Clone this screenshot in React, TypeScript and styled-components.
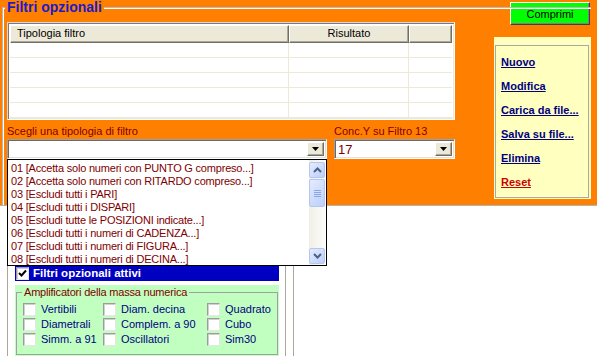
import React from "react";
import styled, { createGlobalStyle } from "styled-components";

const GlobalStyle = createGlobalStyle`
  html, body { margin: 0; padding: 0; background: #fff; }
  body { font-family: "Liberation Sans", Arial, sans-serif; font-size: 11px; }
  * { box-sizing: border-box; }
`;

const Page = styled.div`
  width: 597px;
  height: 356px;
  overflow: hidden;
  background: #fff;
`;

const OrangePanel = styled.div`
  position: relative;
  height: 206px;
  background: #ff8000;
  border-bottom: 1px solid #b4b4b4;
  padding-top: 7px;
`;

const Frame = styled.div`
  position: relative;
  margin: 0 6px 0 2px;
  height: 198px;
  border-top: 1px solid #b8b8b8;
  border-left: 1px solid #b8b8b8;
  box-shadow: inset 1px 1px 0 #fff;
  padding: 14px 0 0 4px;
`;

const Caption = styled.div`
  position: absolute;
  top: -9px;
  left: 2px;
  padding: 0 2px;
  background: #ff8000;
  color: #1c1cc8;
  font-weight: bold;
  font-size: 14px;
  line-height: 16px;
`;

const CompressButton = styled.button`
  position: absolute;
  top: 2px;
  right: 7px;
  width: 80px;
  height: 23px;
  padding: 0;
  background: #00ff00;
  border: 1px solid;
  border-color: #fff #404040 #404040 #fff;
  box-shadow: inset -1px -1px 0 #808080;
  font: 11px "Liberation Sans", Arial, sans-serif;
  color: #000;
`;

const Content = styled.div`
  display: flex;
  justify-content: space-between;
`;

const LeftCol = styled.div`
  width: 448px;
`;

const Grid = styled.div`
  width: 448px;
  height: 98px;
  background: #fff;
  border: 1px solid;
  border-color: #d8d8d8 #fff #fff #d8d8d8;
  box-shadow: inset 1px 1px 0 #7a7a7a, inset -1px -1px 0 #ece9d8;
  padding: 2px 2px 1px 2px;
`;

const GridRow = styled.div<{ $head?: boolean }>`
  display: grid;
  grid-template-columns: 279px 120px 1fr;
  height: ${(p) => (p.$head ? "18px" : "15px")};
`;

const HeadCell = styled.div<{ $center?: boolean }>`
  background: #ece9d8;
  border: 1px solid;
  border-color: #fff #716f64 #716f64 #fff;
  box-shadow: inset -1px -1px 0 #aca899;
  color: #000;
  line-height: 15px;
  padding-left: ${(p) => (p.$center ? "0" : "6px")};
  text-align: ${(p) => (p.$center ? "center" : "left")};
`;

const Cell = styled.div`
  border-right: 1px solid #ece9d8;
  border-bottom: 1px solid #ece9d8;
  &:last-child { border-right: none; }
`;

const FieldRow = styled.div`
  display: flex;
  gap: 7px;
  margin-top: 5px;
`;

const Field = styled.div<{ $w: number }>`
  position: relative;
  width: ${(p) => p.$w}px;
`;

const FieldLabel = styled.div`
  height: 14px;
  line-height: 13px;
  color: #800000;
`;

const Combo = styled.div`
  height: 20px;
  display: flex;
  align-items: stretch;
  background: #fff;
  border: 1px solid;
  border-color: #a0a0a0 #fff #fff #a0a0a0;
  box-shadow: inset 1px 1px 0 #696969, inset -1px -1px 0 #e0e0e0;
  padding: 2px 2px 2px 3px;
`;

const ComboValue = styled.div`
  flex: 1;
  color: #800000;
  font-size: 13px;
  line-height: 15px;
`;

const DropButton = styled.div`
  width: 17px;
  display: flex;
  align-items: center;
  justify-content: center;
  background: #ece9d8;
  border: 1px solid;
  border-color: #fff #716f64 #716f64 #fff;
  box-shadow: inset -1px -1px 0 #aca899;
`;

const DropList = styled.div`
  position: absolute;
  top: 100%;
  left: 0;
  width: 320px;
  height: 107px;
  z-index: 5;
  display: flex;
  background: #fff;
  border: 1px solid #000;
`;

const Items = styled.div`
  flex: 1;
  padding: 2px 0 0 3px;
`;

const Item = styled.div`
  height: 13px;
  line-height: 13px;
  color: #800000;
  letter-spacing: -0.2px;
  white-space: nowrap;
`;

const ScrollTrack = styled.div`
  width: 16px;
  margin-right: 1px;
  display: flex;
  flex-direction: column;
  padding: 2px 0 1px;
  background: linear-gradient(90deg, #f0eee6, #fcfcf9);
`;

const ScrollBtn = styled.div<{ $h?: number }>`
  height: ${(p) => p.$h ?? 16}px;
  display: flex;
  align-items: center;
  justify-content: center;
  flex-direction: column;
  gap: 1px;
  border: 1px solid #b4c6f1;
  border-radius: 2px;
  background: linear-gradient(135deg, #e4ecfe, #bccffa);
`;

const Grip = styled.div`
  width: 7px;
  height: 1px;
  background: #8aa5e6;
`;

const TrackSpace = styled.div`
  flex: 1;
`;

const RightCol = styled.div`
  padding-top: 15px;
`;

const Yellow = styled.div`
  width: 97px;
  height: 162px;
  background: #ffffc0;
  padding: 8px 2px 1px 1px;
`;

const YellowInner = styled.div`
  height: 100%;
  border: 1px solid #a8a8a8;
  padding: 4px 0 0 5px;
`;

const ActionLink = styled.a<{ $danger?: boolean }>`
  display: block;
  line-height: 24px;
  font-weight: bold;
  font-size: 11px;
  color: ${(p) => (p.$danger ? "#cc0000" : "#000080")};
  text-decoration: underline;
`;

const Lower = styled.div`
  display: flex;
  height: 150px;
`;

const LowerFrame = styled.div`
  margin-left: 7px;
  width: 279px;
  border-left: 1px solid #aca899;
  border-right: 1px solid #aca899;
  padding: 59px 0 0 7px;
`;

const SideFrame = styled.div`
  margin-left: 7px;
  flex: 1;
  border-left: 1px solid #aca899;
`;

const BlueBar = styled.div`
  width: 264px;
  height: 16px;
  display: flex;
  align-items: center;
  gap: 4px;
  padding-left: 1px;
  background: #0000c0;
  color: #fff;
  font-weight: bold;
  font-size: 11.5px;
`;

const Box = styled.div`
  width: 13px;
  height: 13px;
  flex: none;
  display: flex;
  align-items: center;
  justify-content: center;
  background: #fff;
  border: 1px solid;
  border-color: #9c9c9c #e6e6e6 #e6e6e6 #9c9c9c;
  box-shadow: inset 1px 1px 0 #d0d0d0;
`;

const GreenPanel = styled.div`
  margin-top: 4px;
  width: 264px;
  height: 80px;
  background: #c0ffc0;
  padding: 7px 1px 0 1px;
`;

const Group = styled.div`
  position: relative;
  height: 63px;
  border: 1px solid #a0a0a0;
  padding: 10px 0 0 6px;
`;

const GroupCaption = styled.div`
  position: absolute;
  top: -8px;
  left: 5px;
  padding: 0 2px;
  background: #c0ffc0;
  color: #800000;
  letter-spacing: -0.2px;
  line-height: 14px;
`;

const CheckGrid = styled.div`
  display: grid;
  grid-template-columns: 80px 104px auto;
  grid-auto-rows: 15px;
`;

const CheckItem = styled.div`
  display: flex;
  align-items: flex-start;
  gap: 5px;
  color: #000080;
  line-height: 13px;
`;

const Chevron = ({ up }: { up?: boolean }) => (
  <svg width="9" height="6" viewBox="0 0 9 6">
    <polyline
      points={up ? "1,5 4.5,1.5 8,5" : "1,1 4.5,4.5 8,1"}
      fill="none"
      stroke="#4d6185"
      strokeWidth="2"
    />
  </svg>
);

const Arrow = () => (
  <svg width="7" height="4" viewBox="0 0 7 4">
    <polygon points="0,0 7,0 3.5,4" fill="#000" />
  </svg>
);

const Check = () => (
  <svg width="9" height="9" viewBox="0 0 9 9">
    <polyline points="1,4 3.5,6.5 8,1.5" fill="none" stroke="#000" strokeWidth="2" />
  </svg>
);

const filters = [
  "01 [Accetta solo numeri con PUNTO G compreso...]",
  "02 [Accetta solo numeri con RITARDO compreso...]",
  "03 [Escludi tutti i PARI]",
  "04 [Escludi tutti i DISPARI]",
  "05 [Escludi tutte le POSIZIONI indicate...]",
  "06 [Escludi tutti i numeri di CADENZA...]",
  "07 [Escludi tutti i numeri di FIGURA...]",
  "08 [Escludi tutti i numeri di DECINA...]",
];

const amplifiers = [
  "Vertibili",
  "Diam. decina",
  "Quadrato",
  "Diametrali",
  "Complem. a 90",
  "Cubo",
  "Simm. a 91",
  "Oscillatori",
  "Sim30",
];

const actions = ["Nuovo", "Modifica", "Carica da file...", "Salva su file...", "Elimina"];

export default function App() {
  return (
    <Page>
      <GlobalStyle />
      <OrangePanel>
        <CompressButton>Comprimi</CompressButton>
        <Frame>
          <Caption>Filtri opzionali</Caption>
          <Content>
            <LeftCol>
              <Grid>
                <GridRow $head>
                  <HeadCell>Tipologia filtro</HeadCell>
                  <HeadCell $center>Risultato</HeadCell>
                  <HeadCell />
                </GridRow>
                {[0, 1, 2, 3, 4].map((r) => (
                  <GridRow key={r}>
                    <Cell />
                    <Cell />
                    <Cell />
                  </GridRow>
                ))}
              </Grid>
              <FieldRow>
                <Field $w={320}>
                  <FieldLabel>Scegli una tipologia di filtro</FieldLabel>
                  <Combo>
                    <ComboValue />
                    <DropButton>
                      <Arrow />
                    </DropButton>
                  </Combo>
                  <DropList>
                    <Items>
                      {filters.map((f) => (
                        <Item key={f}>{f}</Item>
                      ))}
                    </Items>
                    <ScrollTrack>
                      <ScrollBtn>
                        <Chevron up />
                      </ScrollBtn>
                      <ScrollBtn $h={28} style={{ marginTop: 1 }}>
                        <Grip />
                        <Grip />
                        <Grip />
                        <Grip />
                      </ScrollBtn>
                      <TrackSpace />
                      <ScrollBtn>
                        <Chevron />
                      </ScrollBtn>
                    </ScrollTrack>
                  </DropList>
                </Field>
                <Field $w={121}>
                  <FieldLabel>Conc.Y su Filtro 13</FieldLabel>
                  <Combo>
                    <ComboValue>17</ComboValue>
                    <DropButton>
                      <Arrow />
                    </DropButton>
                  </Combo>
                </Field>
              </FieldRow>
            </LeftCol>
            <RightCol>
              <Yellow>
                <YellowInner>
                  {actions.map((a) => (
                    <ActionLink key={a}>{a}</ActionLink>
                  ))}
                  <ActionLink $danger>Reset</ActionLink>
                </YellowInner>
              </Yellow>
            </RightCol>
          </Content>
        </Frame>
      </OrangePanel>
      <Lower>
        <LowerFrame>
          <BlueBar>
            <Box>
              <Check />
            </Box>
            Filtri opzionali attivi
          </BlueBar>
          <GreenPanel>
            <Group>
              <GroupCaption>Amplificatori della massa numerica</GroupCaption>
              <CheckGrid>
                {amplifiers.map((a) => (
                  <CheckItem key={a}>
                    <Box />
                    {a}
                  </CheckItem>
                ))}
              </CheckGrid>
            </Group>
          </GreenPanel>
        </LowerFrame>
        <SideFrame />
      </Lower>
    </Page>
  );
}
